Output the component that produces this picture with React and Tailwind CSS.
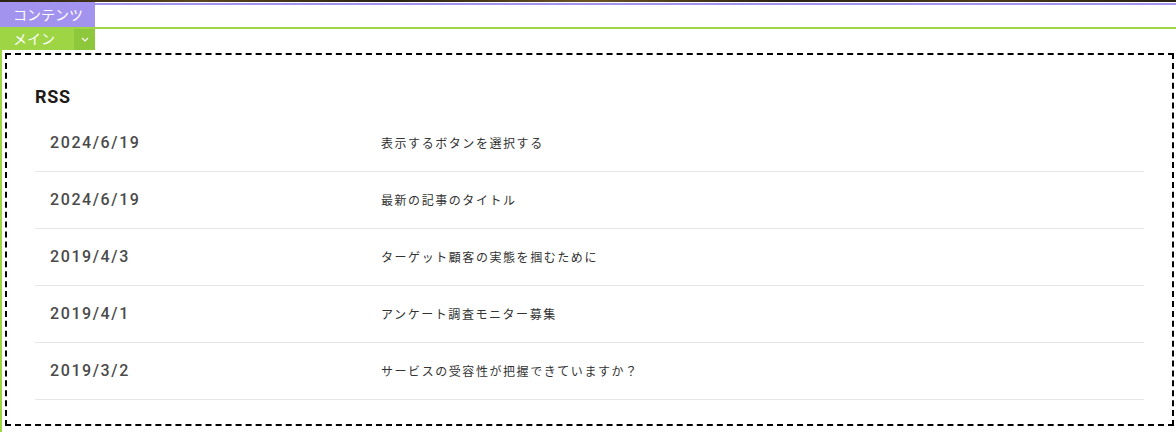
import React from "react";

const rows = [
  ["2024/6/19", "表示するボタンを選択する"],
  ["2024/6/19", "最新の記事のタイトル"],
  ["2019/4/3", "ターゲット顧客の実態を掴むために"],
  ["2019/4/1", "アンケート調査モニター募集"],
  ["2019/3/2", "サービスの受容性が把握できていますか？"],
];

export default function App() {
  return (
    <div
      className="w-[1176px] h-[432px] bg-white overflow-hidden flex flex-col"
      style={{ fontFamily: '"Noto Sans CJK JP", sans-serif' }}
    >
      <div className="h-[2px] shrink-0 bg-[linear-gradient(90deg,#2a2113,#5a4520,#2a2113,#6b5325,#2a2113,#4b3a1c,#2a2113)]" />
      <div className="flex shrink-0 items-start">
        <div className="w-[95px] h-[25px] bg-[#a293ef] text-white text-[14px] leading-[25px] pl-[13px]">
          コンテンツ
        </div>
        <div className="flex-1 mt-[1px] h-[2px] bg-[#a293ef]" />
      </div>
      <div className="flex shrink-0 items-start">
        <div className="w-[95px] h-[23px] bg-[#9dd545] flex items-end">
          <span className="flex-1 text-white text-[14px] leading-[21px] pl-[13px] pb-[1px]">
            メイン
          </span>
          <span className="w-[21px] h-[21px] bg-[#8dc83c] flex items-center justify-center">
            <svg width="8" height="5" viewBox="0 0 8 5" fill="none">
              <path d="M1 1l3 3 3-3" stroke="white" strokeWidth="1.2" />
            </svg>
          </span>
        </div>
        <div className="flex-1 h-[2px] bg-[#9dd545]" />
      </div>
      <div className="flex-1 border-l-2 border-[#9dd545] pl-[3px] pt-[3px] pr-[2px] pb-[6px] flex">
        <div className="flex-1 border-2 border-dashed border-black pt-[30px] px-[28px]">
          <h2
            className="text-[18px] leading-[24px] font-bold tracking-[0.04em] text-[#1f1a17] mb-[5.5px]"
            style={{ fontFamily: 'Roboto, "Noto Sans CJK JP", sans-serif' }}
          >
            RSS
          </h2>
          <ul>
            {rows.map(([d, t], i) => (
              <li
                key={i}
                className="h-[57px] border-b border-[#e6e6e6] flex items-center"
              >
                <span
                  className="w-[346px] shrink-0 pl-[15px] text-[16px] font-medium tracking-[0.1em] text-[#4a4a4a]"
                  style={{ fontFamily: 'Roboto, "Noto Sans CJK JP", sans-serif' }}
                >
                  {d}
                </span>
                <span className="text-[12px] tracking-[0.13em] text-[#333]">
                  {t}
                </span>
              </li>
            ))}
          </ul>
        </div>
      </div>
    </div>
  );
}
